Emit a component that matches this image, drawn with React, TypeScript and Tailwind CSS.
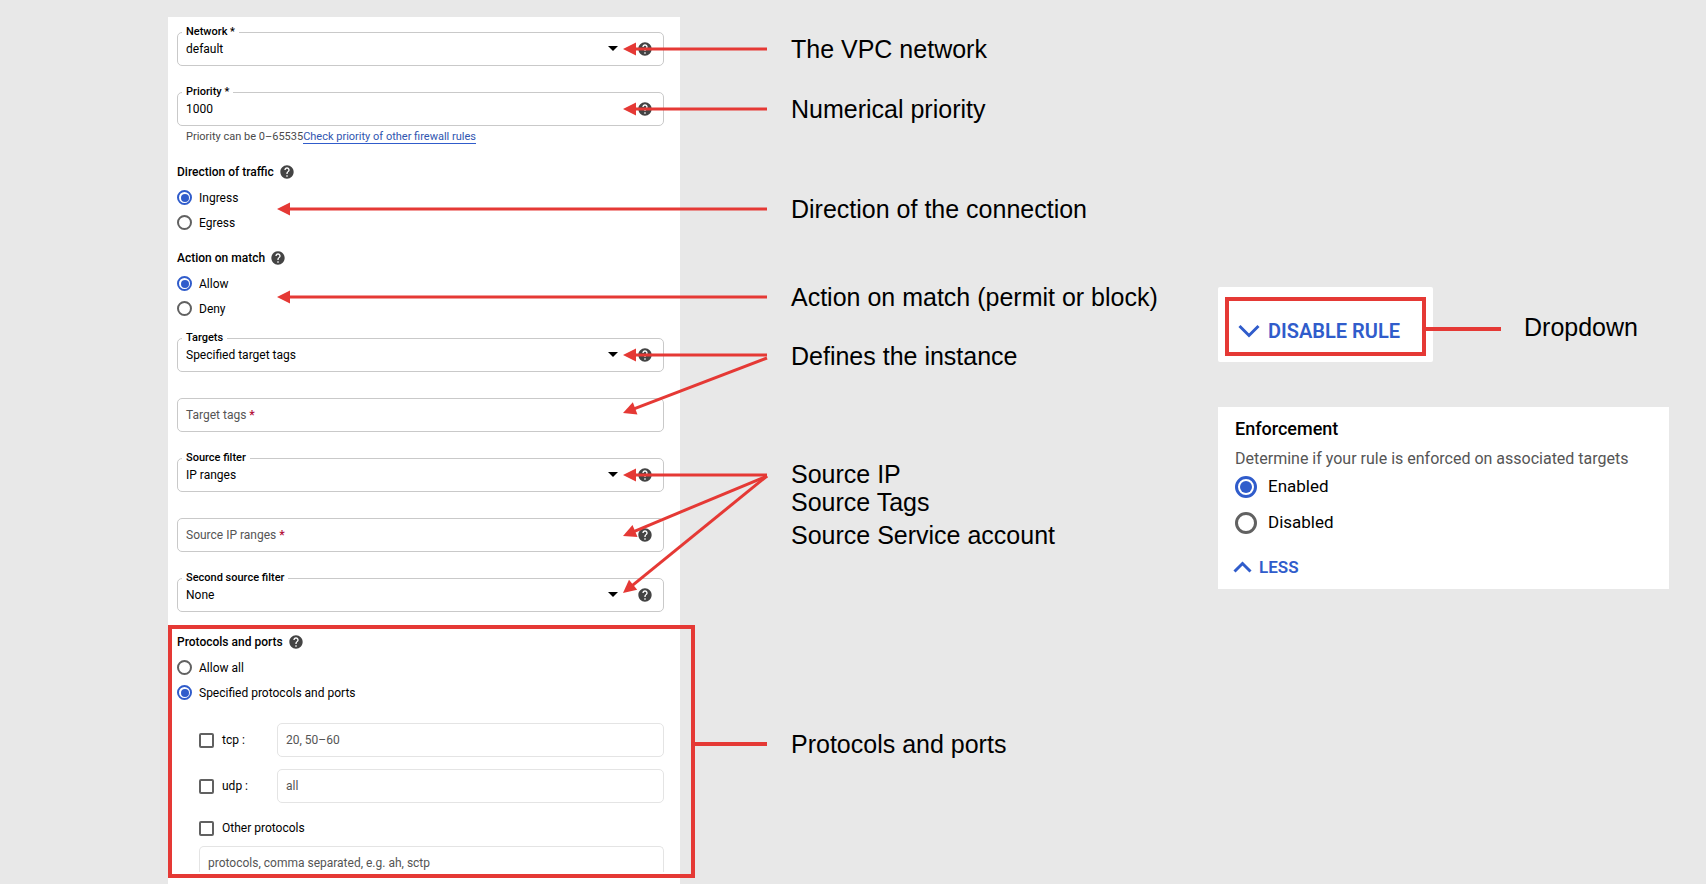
import type { ReactNode } from "react";
import { MdHelp } from "react-icons/md";

const RED = "#e53935";

function Help({ label }: { label: string }) {
  return <MdHelp size={16} className="shrink-0 text-[#444444]" role="img" aria-label={label} />;
}

function Heading({ children }: { children: string }) {
  return (
    <h2 className="mb-[5px] flex h-4 items-center gap-[5px] text-xs leading-4 font-medium text-black">
      {children}
      <Help label={`About ${children}`} />
    </h2>
  );
}

function Radio({ name, label, checked = false }: { name: string; label: string; checked?: boolean }) {
  return (
    <label className="flex h-[25px] items-center gap-[7px] text-xs text-black">
      <input
        type="radio"
        name={name}
        defaultChecked={checked}
        className="grid size-[15px] shrink-0 appearance-none place-content-center rounded-full border-2 border-[#616161] before:size-2 before:rounded-full checked:border-[#305ccb] checked:before:bg-[#305ccb]"
      />
      {label}
    </label>
  );
}

function Notch({ id, children }: { id: string; children: string }) {
  return (
    <label
      htmlFor={id}
      className="absolute -top-2 left-[5px] bg-white px-1 text-[11px] leading-4 font-medium text-black"
    >
      {children}
    </label>
  );
}

const box = "h-[34px] w-full rounded-[5px] border border-[#c9c9c9] bg-transparent px-2 text-xs";

function SelectField({ id, label, value }: { id: string; label: string; value: string }) {
  return (
    <div className="relative">
      <select id={id} defaultValue={value} className={`${box} appearance-none text-black`}>
        <option>{value}</option>
      </select>
      <Notch id={id}>{label}</Notch>
      <svg viewBox="0 0 10 5" className="pointer-events-none absolute top-[14px] right-[46px] h-[5px] w-[10px]">
        <path d="M0 0h10L5 5z" fill="#000" />
      </svg>
      <div className="absolute top-[9px] right-[11px]">
        <Help label={`About ${label}`} />
      </div>
    </div>
  );
}

function TagField({ id, label, help = false }: { id: string; label: string; help?: boolean }) {
  return (
    <div className="relative">
      <input id={id} type="text" required className={`${box} text-black`} />
      <label htmlFor={id} className="absolute top-[9px] left-[9px] text-xs leading-4 text-[#555555]">
        {label} <span className="font-bold text-[#b3123a]">*</span>
      </label>
      {help && (
        <div className="absolute top-[9px] right-[11px]">
          <Help label={`About ${label}`} />
        </div>
      )}
    </div>
  );
}

function Check({ label, className = "" }: { label: string; className?: string }) {
  return (
    <label className={`flex h-4 items-center gap-2 text-xs text-black ${className}`}>
      <input
        type="checkbox"
        className="size-[15px] shrink-0 appearance-none rounded-[2px] border-2 border-[#616161] checked:bg-[#305ccb]"
      />
      {label}
    </label>
  );
}

function PortRow({ label, hint }: { label: string; hint: string }) {
  return (
    <div className="flex items-center">
      <Check label={`${label} :`} className="w-[78px] shrink-0" />
      <input
        type="text"
        aria-label={`${label} ports`}
        placeholder={hint}
        className="h-[34px] min-w-0 flex-1 rounded-[5px] border border-[#e4e4e4] px-2 text-xs placeholder:text-[#555555]"
      />
    </div>
  );
}

const arrows = [
  [599, 32, 455, 32],
  [599, 92, 455, 92],
  [599, 192, 109, 192],
  [599, 280, 109, 280],
  [599, 338, 455, 338],
  [599, 341, 455, 396],
  [599, 458, 455, 458],
  [599, 459, 455, 519],
  [599, 459, 455, 576],
];

// Pointers from the notes to the form controls, in the form's own coordinates.
function Pointers() {
  return (
    <svg className="pointer-events-none absolute top-0 left-0 h-[867px] w-[600px] overflow-visible" aria-hidden="true">
      {arrows.map(([x1, y1, x2, y2]) => {
        const length = Math.hypot(x2 - x1, y2 - y1);
        const angle = (Math.atan2(y2 - y1, x2 - x1) * 180) / Math.PI;
        return (
          <g key={`${x2}-${y2}`} transform={`translate(${x2} ${y2}) rotate(${angle})`} fill={RED}>
            <path d="M-13 -6.5L0 0L-13 6.5z" />
            <rect x={-length} y="-1.5" width={length - 11} height="3" />
          </g>
        );
      })}
      <rect x="526" y="725" width="73" height="4" fill={RED} />
    </svg>
  );
}

function Note({ children, className = "" }: { children: ReactNode; className?: string }) {
  return <p className={`text-[25px] leading-[30px] whitespace-nowrap text-black ${className}`}>{children}</p>;
}

function BigRadio({ label, checked = false }: { label: string; checked?: boolean }) {
  return (
    <label className="flex h-[22px] items-center gap-[11px] text-[17px] text-black">
      <input
        type="radio"
        name="enforcement"
        defaultChecked={checked}
        className="grid size-[22px] shrink-0 appearance-none place-content-center rounded-full border-[3px] border-[#616161] before:size-3 before:rounded-full checked:border-[#305ccb] checked:before:bg-[#305ccb]"
      />
      {label}
    </label>
  );
}

export default function App() {
  return (
    <main className="flex min-h-screen bg-[#e8e8e8] pl-[168px] font-['Roboto',sans-serif]">
      <form className="relative mt-[17px] w-[512px] shrink-0 bg-white pt-[15px]">
        <div className="pr-4 pl-[9px]">
          <SelectField id="network" label="Network *" value="default" />
          <div className="relative mt-[26px]">
            <input id="priority" type="text" defaultValue="1000" className={`${box} text-black`} />
            <Notch id="priority">Priority *</Notch>
            <div className="absolute top-[9px] right-[11px]">
              <Help label="About Priority" />
            </div>
          </div>
          <p className="mt-[3px] pl-[9px] text-[11px] leading-4 text-[#4a4a4a]">
            Priority can be 0–65535
            <a href="#rules" className="border-b border-[#305ccb] text-[#3056b0]">
              Check priority of other firewall rules
            </a>
          </p>

          <section className="mt-[19px]">
            <Heading>Direction of traffic</Heading>
            <Radio name="direction" label="Ingress" checked />
            <Radio name="direction" label="Egress" />
          </section>
          <section className="mt-[15px]">
            <Heading>Action on match</Heading>
            <Radio name="action" label="Allow" checked />
            <Radio name="action" label="Deny" />
          </section>

          <div className="mt-[17px] flex flex-col gap-[26px]">
            <SelectField id="targets" label="Targets" value="Specified target tags" />
            <TagField id="target-tags" label="Target tags" />
            <SelectField id="source-filter" label="Source filter" value="IP ranges" />
            <TagField id="source-ranges" label="Source IP ranges" help />
            <SelectField id="second-filter" label="Second source filter" value="None" />
          </div>
        </div>

        <section className="mt-[13px] mb-[6px] -mr-[15px] border-4 border-[#e53935] pt-[5px] pr-[27px] pb-[2px] pl-[5px]">
          <Heading>Protocols and ports</Heading>
          <Radio name="protocols" label="Allow all" />
          <Radio name="protocols" label="Specified protocols and ports" checked />
          <div className="mt-[18px] flex flex-col gap-3 pl-[22px]">
            <PortRow label="tcp" hint="20, 50–60" />
            <PortRow label="udp" hint="all" />
          </div>
          <div className="mt-[17px] pl-[22px]">
            <Check label="Other protocols" />
            <input
              type="text"
              aria-label="Other protocols list"
              placeholder="protocols, comma separated, e.g. ah, sctp"
              className="mt-[10px] block h-[26px] w-full rounded-t-[5px] border border-b-0 border-[#e4e4e4] px-2 pt-[6px] text-xs placeholder:text-[#555555]"
            />
          </div>
        </section>
        <Pointers />
      </form>

      <section className="ml-[111px] w-[427px] shrink-0 pt-[34px] font-['Liberation_Sans',Arial,sans-serif]">
        <Note>The VPC network</Note>
        <Note className="mt-[30px]">Numerical priority</Note>
        <Note className="mt-[70px]">Direction of the connection</Note>
        <Note className="mt-[58px]">Action on match (permit or block)</Note>
        <Note className="mt-[29px]">Defines the instance</Note>
        <Note className="mt-[88px] -mb-[2px]">Source IP</Note>
        <Note>Source Tags</Note>
        <Note className="mt-[3px]">Source Service account</Note>
        <Note className="mt-[179px]">Protocols and ports</Note>
      </section>

      <section className="mr-[37px] min-w-0 flex-1 pt-[287px]">
        <div className="flex items-start">
          <div className="shrink-0 rounded-[2px] bg-white px-[7px] pt-[10px] pb-[6px]">
            <button
              type="button"
              className="flex h-[59px] w-[201px] items-end gap-2 border-4 border-[#e53935] pb-[9px] pl-[9px] text-xl leading-6 font-semibold whitespace-nowrap text-[#305ccb]"
            >
              <svg viewBox="0 0 22 24" className="h-6 w-[22px] shrink-0" fill="none" stroke="currentColor" strokeWidth="3">
                <path d="M1.500 7L11 16.500L20.500 7" />
              </svg>
              DISABLE RULE
            </button>
          </div>
          <div className="mt-10 -ml-[7px] h-1 w-[75px] shrink-0 bg-[#e53935]" />
          <Note className="mt-[25px] ml-[23px] font-['Liberation_Sans',Arial,sans-serif]">Dropdown</Note>
        </div>

        <div className="mt-[45px] bg-white pt-3 pb-3 pl-[17px]">
          <h2 className="text-lg leading-5 font-medium text-black">Enforcement</h2>
          <p className="mt-[10px] mb-[7px] text-base leading-5 text-[#555555]">
            Determine if your rule is enforced on associated targets
          </p>
          <div className="flex flex-col gap-[14px]">
            <BigRadio label="Enabled" checked />
            <BigRadio label="Disabled" />
          </div>
          <button
            type="button"
            className="mt-[23px] -ml-[2px] flex items-center gap-[7px] text-[17px] leading-5 font-semibold text-[#305ccb]"
          >
            <svg viewBox="0 0 19 20" className="h-5 w-[19px]" fill="none" stroke="currentColor" strokeWidth="3">
              <path d="M1.500 14.500L9.500 6.500L17.500 14.500" />
            </svg>
            LESS
          </button>
        </div>
      </section>
    </main>
  );
}
